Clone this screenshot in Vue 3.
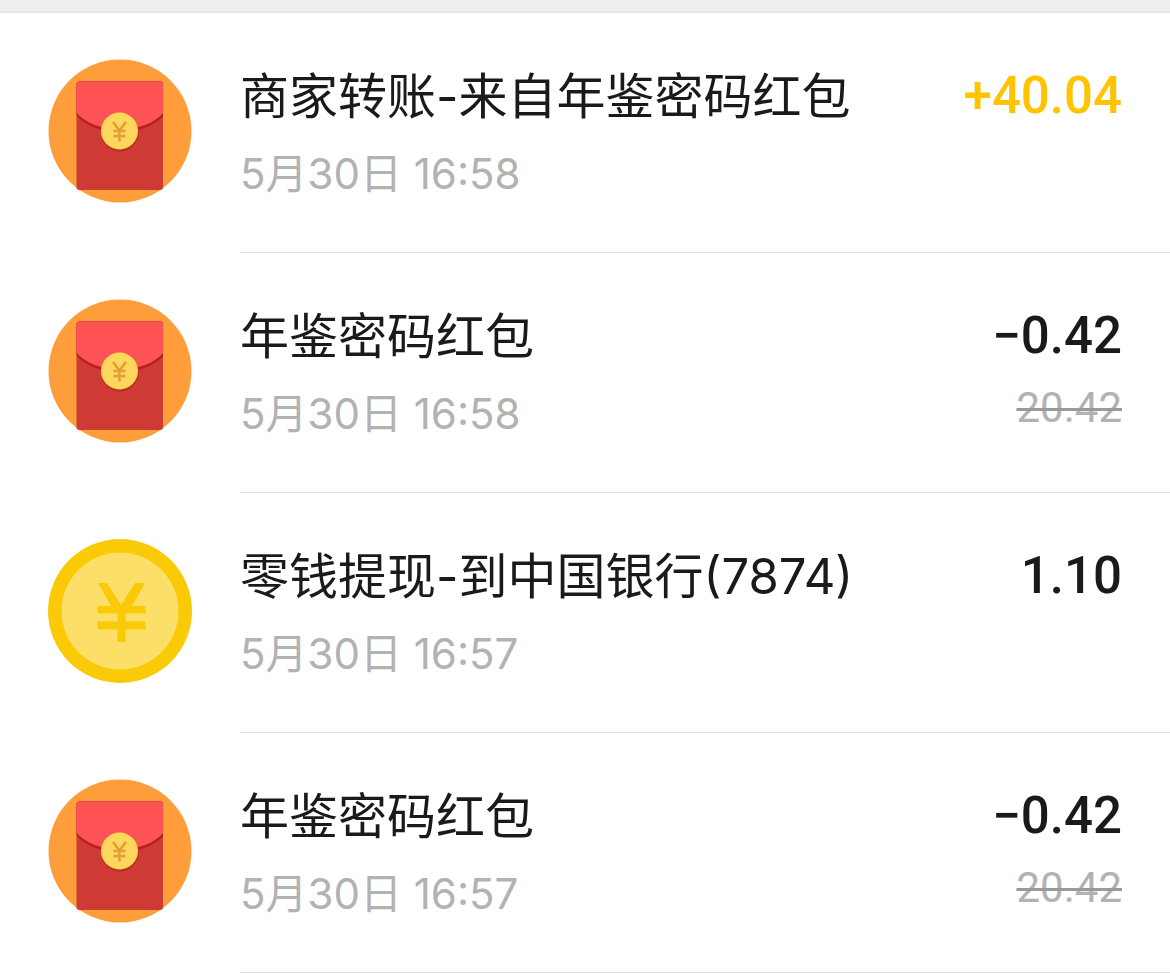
<template>
  <main class="bills">
    <div class="band"></div>
    <ul class="list">
      <li v-for="bill in bills" :key="bill.id" class="bill">
        <svg v-if="bill.icon === 'packet'" class="icon" viewBox="0 0 144 144" aria-hidden="true">
          <defs>
            <clipPath :id="'packet-' + bill.id">
              <rect x="28.500" y="22.500" width="86.500" height="108.500" rx="3" />
            </clipPath>
          </defs>
          <circle cx="72" cy="72" r="71.500" fill="#fd9e3a" />
          <g :clip-path="'url(#packet-' + bill.id + ')'">
            <rect x="28" y="22" width="88" height="110" fill="#cf3a34" />
            <path d="M28 22H116V56C107 67 91 73 72 73S37 67 28 56Z" fill="#b91f26" />
            <path d="M28 22H116V53C107 64 91 70 72 70S37 64 28 53Z" fill="#ff5356" />
          </g>
          <circle cx="72" cy="74" r="18.500" fill="#b52f27" />
          <circle cx="71.500" cy="72" r="18.500" fill="#fcd75c" />
          <path
            d="M65 63L71.500 71.500L78 63M71.500 71V82.500M65.500 72H77.500M65.500 77H77.500"
            fill="none"
            stroke="#e39c38"
            stroke-width="2.400"
          />
        </svg>
        <svg v-else class="icon" viewBox="0 0 144 144" aria-hidden="true">
          <circle cx="72" cy="72" r="72" fill="#f9ca05" />
          <circle cx="72" cy="72" r="58.500" fill="#fcdf69" />
          <path
            d="M50 44H59L73 66L87 44H97L84 67H97.500V74.500H77.500V82.500H97.500V90.500H77.500V103H69.500V90.500H49.500V82.500H69.500V74.500H49.500V67H63Z"
            fill="#f9ca05"
          />
        </svg>

        <div class="content">
          <div class="info">
            <h2 class="title">{{ bill.title }}</h2>
            <time class="date">{{ bill.date }}</time>
          </div>
          <div class="money">
            <span class="amount" :class="{ income: bill.income }">{{ bill.amount }}</span>
            <del v-if="bill.original" class="original">{{ bill.original }}</del>
          </div>
        </div>
      </li>
    </ul>
  </main>
</template>

<script setup>
const bills = [
  { id: 1, icon: 'packet', title: '商家转账-来自年鉴密码红包', date: '5月30日 16:58', amount: '+40.04', income: true },
  { id: 2, icon: 'packet', title: '年鉴密码红包', date: '5月30日 16:58', amount: '−0.42', original: '20.42' },
  { id: 3, icon: 'coin', title: '零钱提现-到中国银行(7874)', date: '5月30日 16:57', amount: '1.10' },
  { id: 4, icon: 'packet', title: '年鉴密码红包', date: '5月30日 16:57', amount: '−0.42', original: '20.42' }
]
</script>

<style>
body {
  margin: 0;
  background: #fff;
}
</style>

<style scoped>
.bills {
  font-family: Inter, "Noto Sans CJK SC", sans-serif;
  color: #1a1a1a;
  overflow: hidden;
}
.band {
  height: 11px;
  background: #eee;
  border-bottom: 2px solid #e5e5e5;
}
.list {
  margin: 0;
  padding: 0;
  list-style: none;
}
.bill {
  display: flex;
  gap: 48px;
  padding-left: 48px;
}
.icon {
  flex: none;
  width: 144px;
  height: 144px;
  margin-top: 46px;
}
.content {
  flex: 1;
  display: flex;
  justify-content: space-between;
  box-sizing: border-box;
  min-height: 240px;
  padding: 51px 48px 0 0;
  border-bottom: 1px solid #e2e2e2;
}
.info,
.money {
  display: flex;
  flex-direction: column;
  gap: 16px;
}
.title {
  margin: 0;
  font-size: 49px;
  font-weight: 400;
  line-height: 66px;
  white-space: nowrap;
}
.date {
  font-size: 42px;
  line-height: 56px;
  color: #b2b2b2;
}
.money {
  align-items: flex-end;
  font-family: Roboto, sans-serif;
}
.amount {
  font-size: 51px;
  font-weight: 500;
  line-height: 64px;
}
.income {
  color: #ffc300;
}
.original {
  font-size: 42px;
  line-height: 48px;
  color: #b2b2b2;
  text-decoration: line-through #999 3px;
}
</style>
